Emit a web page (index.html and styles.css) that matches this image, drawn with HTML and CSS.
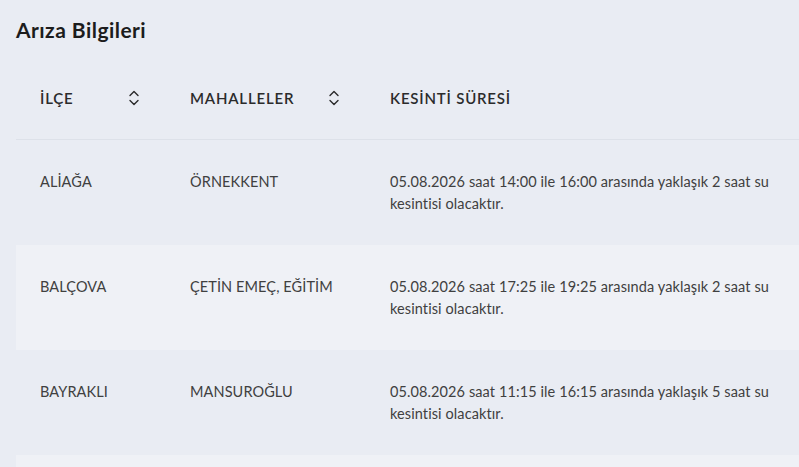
FILE: index.html
```html
<!DOCTYPE html>
<html lang="tr">
<head>
<meta charset="utf-8">
<title>Arıza Bilgileri</title>
<link rel="stylesheet" href="styles.css">
</head>
<body>
<div class="page">
  <h1 class="title">Arıza Bilgileri</h1>
  <table class="faults">
    <colgroup>
      <col class="c-ilce">
      <col class="c-mah">
      <col class="c-sure">
    </colgroup>
    <thead>
      <tr>
        <th><div class="th-inner"><span>İLÇE</span>
          <svg class="sort" viewBox="0 0 12 18" width="12" height="18"><path d="M2 6.5 L6 2.5 L10 6.5 M2 11.5 L6 15.5 L10 11.5" fill="none" stroke="#2a2a2a" stroke-width="1.4" stroke-linecap="round" stroke-linejoin="round"/></svg></div></th>
        <th><div class="th-inner"><span>MAHALLELER</span>
          <svg class="sort" viewBox="0 0 12 18" width="12" height="18"><path d="M2 6.5 L6 2.5 L10 6.5 M2 11.5 L6 15.5 L10 11.5" fill="none" stroke="#2a2a2a" stroke-width="1.4" stroke-linecap="round" stroke-linejoin="round"/></svg></div></th>
        <th><div class="th-inner"><span>KESİNTİ SÜRESİ</span></div></th>
      </tr>
    </thead>
    <tbody>
      <tr>
        <td>ALİAĞA</td>
        <td>ÖRNEKKENT</td>
        <td><div class="desc">05.08.2026 saat 14:00 ile 16:00 arasında yaklaşık 2 saat su kesintisi olacaktır.</div></td>
      </tr>
      <tr class="alt">
        <td>BALÇOVA</td>
        <td>ÇETİN EMEÇ, EĞİTİM</td>
        <td><div class="desc">05.08.2026 saat 17:25 ile 19:25 arasında yaklaşık 2 saat su kesintisi olacaktır.</div></td>
      </tr>
      <tr>
        <td>BAYRAKLI</td>
        <td>MANSUROĞLU</td>
        <td><div class="desc">05.08.2026 saat 11:15 ile 16:15 arasında yaklaşık 5 saat su kesintisi olacaktır.</div></td>
      </tr>
      <tr class="alt">
        <td></td>
        <td></td>
        <td></td>
      </tr>
    </tbody>
  </table>
</div>
</body>
</html>
```

FILE: styles.css
```css
html, body {
  margin: 0;
  padding: 0;
  background: #e9ecf3;
  overflow: hidden;
}
body {
  font-family: "Lato", "Open Sans", sans-serif;
  color: #333;
}
.page {
  padding: 16px 0 0 16px;
}
.title {
  margin: 0;
  font-size: 21px;
  line-height: 28px;
  font-weight: 700;
  letter-spacing: 0.45px;
  color: #1c1c1c;
}
.faults {
  margin-top: 13px;
  border-collapse: collapse;
  table-layout: fixed;
  width: 810px;
}
.c-ilce { width: 150px; }
.c-mah { width: 200px; }
.c-sure { width: 460px; }
.faults th {
  height: 82px;
  padding: 0 26px 0 24px;
  text-align: left;
  font-size: 15px;
  font-weight: 600;
  color: #2b2b2b;
  letter-spacing: 0.8px;
  border-bottom: 1px solid #dde1e9;
  vertical-align: middle;
}
.th-inner {
  display: flex;
  align-items: center;
  justify-content: space-between;
}
.sort {
  display: block;
  flex: none;
}
.faults td {
  height: 105px;
  box-sizing: border-box;
  padding: 31px 24px 0 24px;
  vertical-align: top;
  font-size: 14.5px;
  line-height: 22px;
  letter-spacing: 0.1px;
  color: #404040;
}
.faults tr.alt td {
  background: #eff1f6;
}
.desc {
  max-width: 400px;
}
```
